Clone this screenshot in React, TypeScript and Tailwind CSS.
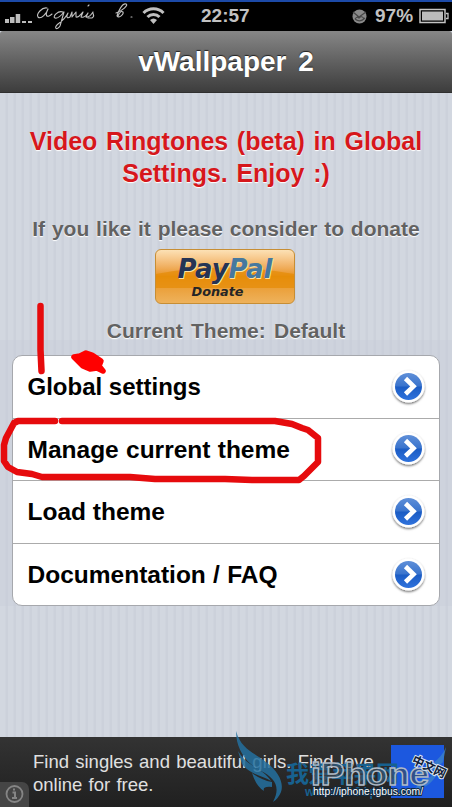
import React from "react";

const items = [
  { label: "Global settings", spacing: "text-[24px]" },
  { label: "Manage current theme", spacing: "text-[24.5px] [word-spacing:.5px]" },
  { label: "Load theme", spacing: "text-[24.5px]" },
  { label: "Documentation / FAQ", spacing: "text-[24.5px] [word-spacing:.5px]" },
];

function Disclosure() {
  return (
    <svg width="38" height="40" viewBox="0 0 38 40" className="block">
      <defs>
        <linearGradient id="blue" x1="0" y1="0" x2="0" y2="1">
          <stop offset="0" stopColor="#5f8fd8" />
          <stop offset=".48" stopColor="#3a74cd" />
          <stop offset=".52" stopColor="#1b5cc4" />
          <stop offset="1" stopColor="#2f72dc" />
        </linearGradient>
        <filter id="shade" x="-20%" y="-20%" width="140%" height="150%">
          <feDropShadow dx="0" dy="1.3" stdDeviation="1.1" floodColor="#000" floodOpacity=".6" />
        </filter>
      </defs>
      <circle cx="19.500" cy="19.500" r="16" fill="#fff" filter="url(#shade)" />
      <circle cx="19.500" cy="19.500" r="13.500" fill="url(#blue)" />
      <path d="M16.500 11.500 L24.500 19.300 L16.500 27" fill="none" stroke="#fff" strokeWidth="4.600" />
    </svg>
  );
}

function StatusBar() {
  return (
    <header className="relative h-[31px] w-full border-t-2 border-[#1c4aa8] bg-black text-[#c2c2c2]">
      <svg width="452" height="29" viewBox="0 2 452 29" className="block">
        <g fill="#bdbdbd">
          <rect x="5" y="19" width="4" height="4" />
          <rect x="10" y="17" width="4.500" height="6" />
          <rect x="15.700" y="14" width="4.500" height="9" />
          <rect x="22" y="21" width="4" height="2" />
          <rect x="28" y="21" width="4" height="2" />
        </g>
        <g fill="none" stroke="#c0c0c0" strokeWidth="1.1" strokeLinecap="round" strokeLinejoin="round">
          <path d="M47 8 C42 7 36 14 38 17 C41 20 47 13 48 9 C45 15 46 19 52 14 M63 12 C58 10 52 17 55 18 C59 19 62 14 64 12 L60 26 C57 31 53 28 58 24 C62 21 65 19 68 13 C66 17 67 19 70 17 L72 12 L72 17 L76 12 L76 17 C79 18 81 14 83 12 L81 17 C84 18 86 16 88 13 L86 17 C89 18 91 15 93 12 C92 14 96 16 92 18 L88 18 M88 6 L89 5" />
          <path d="M116 13 C122 11 129 5 126 4 C122 3 118 12 117 16 C119 19 124 14 123 12 C121 10 119 14 118 16 M131 17 L132 17" />
          <path d="M143.500 13 A14 14 0 0 1 163.500 13" strokeWidth="3" strokeLinecap="butt" />
          <path d="M147.500 17 A8.500 8.500 0 0 1 159.500 17" strokeWidth="3" strokeLinecap="butt" />
        </g>
        <path d="M150 20 Q153.500 17 157 20 L153.500 24 Z" fill="#c0c0c0" />
        <circle cx="359.500" cy="16.500" r="7" fill="#898989" />
        <path d="M353 12 L359 17 L366 12 M355 19 Q357 16 359 18 Q362 15 364 19 M355 19 Q360 23 365 18" fill="none" stroke="#454545" strokeWidth="1.2" />
        <rect x="420" y="9.500" width="25" height="13" fill="none" stroke="#c4c4c4" strokeWidth="1.500" />
        <rect x="422" y="11.500" width="21" height="9" fill="#bcbcbc" />
        <path d="M446 13.500 H448 V18.500 H446" fill="none" stroke="#c4c4c4" strokeWidth="1.3" />
      </svg>
      <span className="absolute top-[2px] left-[201px] text-[19px] leading-[24px] font-bold">22:57</span>
      <span className="absolute top-[2px] left-[375px] text-[19px] leading-[24px] font-bold">97%</span>
    </header>
  );
}

function RedMarks() {
  return (
    <svg width="452" height="220" viewBox="0 290 452 220" className="pointer-events-none absolute top-[290px] left-0" fill="none" stroke="#e60b0d" strokeWidth="6.500" strokeLinecap="round" strokeLinejoin="round">
      <path d="M40.500 306 L40.500 350 L41.500 371" />
      <path d="M74 357 L80 356 L86 353 L92 355 L101 361 L99 366 L103 371 L97 368 L90 369 L83 366 Z" fill="#f00" stroke="#f00" strokeWidth="5.500" />
      <path d="M55 421 L18 421 L14 423 L6 438 L4 445 L4 461 L8 467 L17 472 L32 474 L42 477 L130 477 L155 479 L225 479 L252 480 L299 480 L304 476 L318 462 L318 438 L308 430 L302 428 L292 424 L275 421 L62 421" />
    </svg>
  );
}

function Watermark() {
  return (
    <svg width="222" height="82" viewBox="230 725 222 82" className="pointer-events-none absolute right-0 bottom-0">
      <g fill="#24709f" opacity=".85">
        <path d="M236 731 C241 749 253 752 266 762 C279 772 284 783 281 792 Q278 799 273 802 C281 787 275 778 261 771 C247 764 236 750 236 731 Z" />
        <path d="M238 751 C247 767 263 768 271 781 C264 776 250 775 242 764 Z M252 773 Q261 780 272 782 L272 787 Q262 786 264 791 Q256 786 252 773 Z" />
      </g>
      <path d="M446 747 Q440 762 422 769 L418 777 Q435 771 443 762 Z M439 770 Q431 778 421 780 L414 791 Q432 787 439 770 Z" fill="#3b82c9" opacity=".8" />
      <text x="286" y="782" textLength="113" fill="#17618f" className="font-['Noto_Sans_CJK_SC',sans-serif] text-[23px] font-bold">我爱苹果网</text>
      <text x="305" y="796" textLength="110" fill="#17618f" className="font-['Liberation_Sans',sans-serif] text-[12px] font-bold">www.52iphone</text>
      <text x="311" y="785" textLength="118" lengthAdjust="spacingAndGlyphs" fill="#3c4a57" fillOpacity=".65" stroke="#aebac6" strokeWidth="1.300" className="font-['Liberation_Sans',sans-serif] text-[31px] font-bold">iPhone</text>
      <g className="font-['Liberation_Sans',sans-serif] text-[10.5px]" fill="#fff" stroke="#102940" strokeWidth="2" paintOrder="stroke">
        <text x="313" y="795" textLength="110" lengthAdjust="spacingAndGlyphs">http://iphone.tgbus.com/</text>
      </g>
      <text x="411" y="763" transform="rotate(25 411 763)" fill="#111e39" stroke="#dce6f3" strokeWidth="2" paintOrder="stroke" className="font-['Noto_Sans_CJK_SC',sans-serif] text-[12px] font-bold">中文网</text>
    </svg>
  );
}

export default function App() {
  return (
    <div className="relative flex h-[807px] w-[452px] flex-col overflow-hidden bg-[#d0d5df] bg-[repeating-linear-gradient(90deg,#d2d7e0_0px,#d2d7e0_5px,#ccd1db_6px,#ccd1db_8px)] font-['Liberation_Sans',Arial,sans-serif]">
      <StatusBar />
      <div className="flex h-[62px] shrink-0 items-center justify-center rounded-t-[3px] border-b border-[#303030] bg-gradient-to-b from-[#878787] to-[#3d3d3d]">
        <h1 className="text-[28px] font-bold text-white [text-shadow:0_-1px_1px_#222] [word-spacing:4px]">vWallpaper 2</h1>
      </div>
      <main className="flex flex-1 flex-col">
        <section className="flex h-[247px] flex-col items-center pt-[32px] font-bold whitespace-nowrap">
          <h2 className="text-center text-[25px] leading-[32px] text-[#d6171c] [text-shadow:0_1px_1px_white] [word-spacing:1.7px]">Video Ringtones (beta) in Global<br />Settings. Enjoy :)</h2>
          <p className="mt-[28px] text-[21px] leading-[24px] text-[#626262] [text-shadow:0_1px_1px_white] [word-spacing:1px]">If you like it please consider to donate</p>
          <button className="relative mt-[8px] -ml-[2px] flex h-[55px] w-[140px] shrink-0 flex-col items-center overflow-hidden rounded-[6px] border border-[#c78e35] bg-gradient-to-b from-[#fce1b5] via-[#e8920f] to-[#eeb25b] font-['DejaVu_Sans',sans-serif] italic">
            <svg className="absolute inset-0" width="138" height="53"><path d="M0 24 Q65 11 138 24 V38 H0Z" fill="#e58b05" opacity=".7" /></svg>
            <span className="relative mt-[5px] text-[26px] leading-[28px] text-[#253454] [text-shadow:1px_1px_0_#ffe0a0]">Pay<span className="text-[#46789e]">Pal</span></span>
            <span className="relative mt-[1px] mr-[15px] text-[12.8px] leading-[15px] text-[#252525]">Donate</span>
          </button>
          <p className="mt-[14px] text-[21px] leading-[25px] text-[#626262] [text-shadow:0_1px_1px_white] [word-spacing:2.5px]">Current Theme: Default</p>
        </section>
        <div className="h-[266px] w-full bg-[#c8ceda]/40 px-[12px] pt-[15px]">
          <ul className="h-[251px] overflow-hidden rounded-[10px] border border-[#a6a8ad] bg-white">
            {items.map(({ label, spacing }) => (
              <li key={label} className="flex h-[62.5px] items-center justify-between border-b border-[#ababab] pr-[12px] pl-[14.5px] last:border-b-0">
                <span className={`pt-[1px] leading-[32px] font-bold whitespace-nowrap text-black ${spacing}`}>{label}</span>
                <Disclosure />
              </li>
            ))}
          </ul>
        </div>
      </main>
      <footer className="relative flex h-[70px] shrink-0 bg-gradient-to-b from-[#333] to-[#202020]">
        <p className="pt-[14px] pl-[33px] text-[18.5px] leading-[22.5px] whitespace-nowrap text-[#e0e0e0] [word-spacing:1.1px]">Find singles and beautiful girls. Find love<br />online for free.</p>
        <div className="absolute bottom-0 left-0 h-[25px] w-[29px] rounded-tr-[7px] bg-[#454545]">
          <svg width="29" height="25" fill="none" stroke="#858585" strokeWidth="1.800"><circle cx="14.500" cy="12" r="8" /><path d="M12.500 10.500 H15 V16 M12 16 H17 M14 6.500 V8.500" strokeWidth="2" /></svg>
        </div>
        <div className="absolute right-[8px] bottom-[9px] h-[53px] w-[53px] bg-[#1c58df]" />
      </footer>
      <RedMarks />
      <Watermark />
    </div>
  );
}
